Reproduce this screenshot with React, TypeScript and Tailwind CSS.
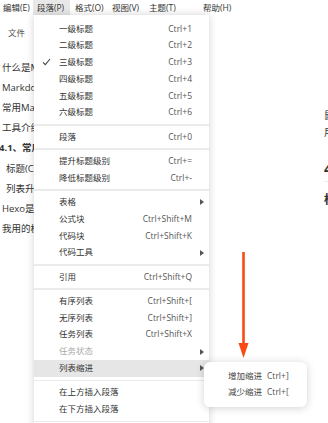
import React from "react";

type MenuEntry =
  | { kind: "item"; label: string; shortcut?: string; sub?: boolean; checked?: boolean; disabled?: boolean; active?: boolean }
  | { kind: "sep" };

const menuBar = [
  { label: "编辑(E)", className: "w-[33px] pl-[3px]" },
  { label: "段落(P)", className: "w-[37px] pl-[4px] bg-[#e8e8e8]" },
  { label: "格式(O)", className: "w-[38px] pl-[5px]" },
  { label: "视图(V)", className: "w-[37px] pl-[4px]" },
  { label: "主题(T)", className: "w-[54px] pl-[4px]" },
  { label: "帮助(H)", className: "pl-[4px]" },
];

const entries: MenuEntry[] = [
  { kind: "item", label: "一级标题", shortcut: "Ctrl+1" },
  { kind: "item", label: "二级标题", shortcut: "Ctrl+2" },
  { kind: "item", label: "三级标题", shortcut: "Ctrl+3", checked: true },
  { kind: "item", label: "四级标题", shortcut: "Ctrl+4" },
  { kind: "item", label: "五级标题", shortcut: "Ctrl+5" },
  { kind: "item", label: "六级标题", shortcut: "Ctrl+6" },
  { kind: "sep" },
  { kind: "item", label: "段落", shortcut: "Ctrl+0" },
  { kind: "sep" },
  { kind: "item", label: "提升标题级别", shortcut: "Ctrl+=" },
  { kind: "item", label: "降低标题级别", shortcut: "Ctrl+-" },
  { kind: "sep" },
  { kind: "item", label: "表格", sub: true },
  { kind: "item", label: "公式块", shortcut: "Ctrl+Shift+M" },
  { kind: "item", label: "代码块", shortcut: "Ctrl+Shift+K" },
  { kind: "item", label: "代码工具", sub: true },
  { kind: "sep" },
  { kind: "item", label: "引用", shortcut: "Ctrl+Shift+Q" },
  { kind: "sep" },
  { kind: "item", label: "有序列表", shortcut: "Ctrl+Shift+[" },
  { kind: "item", label: "无序列表", shortcut: "Ctrl+Shift+]" },
  { kind: "item", label: "任务列表", shortcut: "Ctrl+Shift+X" },
  { kind: "item", label: "任务状态", sub: true, disabled: true },
  { kind: "item", label: "列表缩进", sub: true, active: true },
  { kind: "sep" },
  { kind: "item", label: "在上方插入段落" },
  { kind: "item", label: "在下方插入段落" },
  { kind: "sep" },
  { kind: "item", label: "链接引用" },
];

const outline = [
  { text: "什么是Markdown", indent: false, bold: false },
  { text: "Markdown的优点", indent: false, bold: false },
  { text: "常用Markdown编辑器", indent: false, bold: false },
  { text: "工具介绍", indent: false, bold: false },
  { text: "4.1、常用语法", indent: false, bold: true },
  { text: "标题(Ctrl+数字)", indent: true, bold: false },
  { text: "列表升降级", indent: true, bold: false },
  { text: "Hexo是什么", indent: false, bold: false },
  { text: "我用的模板", indent: false, bold: false },
];

const SubArrow = () => (
  <svg width="4" height="6" viewBox="0 0 4 6">
    <polygon points="0,0 4,3 0,6" fill="#555" />
  </svg>
);

const Check = () => (
  <svg width="9" height="8" viewBox="0 0 9 8">
    <path d="M1 4.3 L3.3 6.6 L8 1" fill="none" stroke="#444" strokeWidth="1.1" />
  </svg>
);

const MenuRow = ({ entry }: { entry: Extract<MenuEntry, { kind: "item" }> }) => (
  <div
    className={`relative flex h-[16.75px] items-center pl-[25px] ${
      entry.active ? "bg-[#e6e6e6]" : ""
    } ${entry.disabled ? "text-[#aaa]" : "text-[#333]"}`}
  >
    {entry.checked && (
      <span className="absolute left-[8px] top-[4px] flex">
        <Check />
      </span>
    )}
    <span className="flex-1 whitespace-nowrap">{entry.label}</span>
    {entry.shortcut && <span className="whitespace-nowrap text-[#555]">{entry.shortcut}</span>}
    <span className="flex w-[17px] justify-end pr-[5px]">{entry.sub && <SubArrow />}</span>
  </div>
);

export default function App() {
  return (
    <div className="relative h-[423px] w-[328px] overflow-hidden bg-white font-['Open_Sans','Noto_Sans_CJK_SC',sans-serif] text-[8.5px] text-[#333]">
      {/* menu bar */}
      <div className="flex h-[15px] items-stretch">
        {menuBar.map((m) => (
          <div key={m.label} className={`flex shrink-0 items-center whitespace-nowrap pt-[1px] ${m.className}`}>
            {m.label}
          </div>
        ))}
      </div>

      <div className="flex">
        {/* sidebar */}
        <div className="w-[60px] shrink-0 text-[9.5px] text-[#333]">
          <div className="pl-[8px] pt-[12px] text-[8.5px] text-[#555]">文件</div>
          <div className="pt-[18px]">
            {outline.map((o) => (
              <div
                key={o.text}
                className={`flex h-[20.2px] items-center whitespace-nowrap ${
                  o.indent ? "pl-[6px]" : o.bold ? "-ml-[1px]" : "pl-[2px]"
                } ${o.bold ? "font-bold" : ""}`}
              >
                {o.text}
              </div>
            ))}
          </div>
        </div>

        {/* editor */}
        <div className="flex-1 pl-[264px] text-[#333]">
          <div className="whitespace-nowrap pt-[92px] text-[10px] leading-[17px]">
            <div>鼠标右键选择段落</div>
            <div>用快捷键操作</div>
          </div>
          <div className="whitespace-nowrap pt-[18px] text-[14px] font-bold leading-[20px]">4.1、常用语法</div>
          <div className="mt-[2px] h-px w-[20px] bg-[#eee]" />
          <div className="whitespace-nowrap pt-[9px] text-[12px] font-bold leading-[18px]">标题</div>
        </div>
      </div>

      {/* dropdown menu */}
      <div className="absolute left-[34px] top-[15px] w-[175px] bg-white pt-[5.5px] pb-[4px] shadow-[0_0_8px_rgba(0,0,0,0.18)]">
        {entries.map((e, i) =>
          e.kind === "sep" ? (
            <div key={i} className="flex h-[7.6px] items-center">
              <div className="h-[1.5px] w-full bg-[#ebebeb]" />
            </div>
          ) : (
            <MenuRow key={i} entry={e} />
          )
        )}
      </div>

      {/* submenu */}
      <div className="absolute left-[204px] top-[362px] w-[103px] rounded-[6px] bg-white py-[6px] text-[#444] shadow-[0_1px_8px_rgba(0,0,0,0.18)]">
        <div className="flex h-[16.5px] items-center gap-[5px] pl-[24px] whitespace-nowrap">
          <span>增加缩进</span>
          <span className="text-[#555]">Ctrl+]</span>
        </div>
        <div className="flex h-[16.5px] items-center gap-[5px] pl-[24px] whitespace-nowrap">
          <span>减少缩进</span>
          <span className="text-[#555]">Ctrl+[</span>
        </div>
      </div>

      {/* annotation arrow */}
      <svg className="absolute left-[236px] top-[250px]" width="16" height="110" viewBox="0 0 16 110">
        <line x1="7.5" y1="2" x2="7.5" y2="96" stroke="#f94a16" strokeWidth="2.6" />
        <polygon points="2.5,93 12.5,93 7.5,108" fill="#f94a16" />
      </svg>
    </div>
  );
}
